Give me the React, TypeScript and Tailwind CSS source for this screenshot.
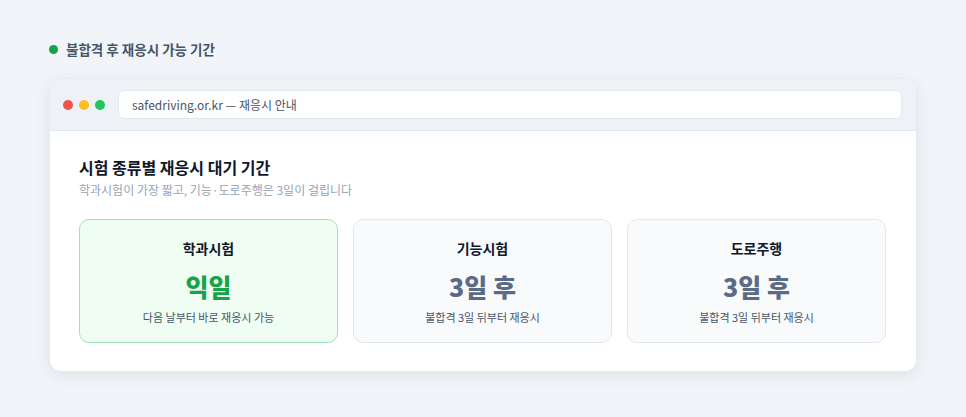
import React from "react";

const font = { fontFamily: '"Noto Sans CJK KR", "Noto Sans", sans-serif' };

type Item = { title: string; value: string; desc: string; pass?: boolean };

const items: Item[] = [
  { title: "학과시험", value: "익일", desc: "다음 날부터 바로 재응시 가능", pass: true },
  { title: "기능시험", value: "3일 후", desc: "불합격 3일 뒤부터 재응시" },
  { title: "도로주행", value: "3일 후", desc: "불합격 3일 뒤부터 재응시" },
];

export default function App() {
  return (
    <div className="w-[966px] h-[417px] bg-[#f1f4f8] px-[49px] pt-[40px]" style={font}>
      {/* section label */}
      <div className="flex items-center gap-[8px] h-[18px]">
        <span className="w-[9px] h-[9px] rounded-full bg-[#16a34a]" />
        <span className="text-[13.5px] font-bold text-[#475569] leading-[18px]">불합격 후 재응시 가능 기간</span>
      </div>

      {/* browser frame */}
      <div className="mt-[20px] w-[868px] bg-white rounded-[12px] overflow-hidden shadow-[0_4px_16px_rgba(15,23,42,0.08)] border border-[#e6ebf1]">
        <div className="flex items-center gap-[13px] bg-[#eef2f6] border-b border-[#e2e8f0] h-[52px] pl-[13px] pr-[14px]">
          <div className="flex items-center gap-[6px]">
            <span className="w-[10px] h-[10px] rounded-full bg-[#ef5350]" />
            <span className="w-[10px] h-[10px] rounded-full bg-[#fbbf24]" />
            <span className="w-[10px] h-[10px] rounded-full bg-[#22c55e]" />
          </div>
          <div className="flex-1 h-[29px] bg-white rounded-[6px] border border-[#e5e9ef] flex items-center px-[13px] text-[12px] text-[#475569]">
            safedriving.or.kr — 재응시 안내
          </div>
        </div>

        <div className="pl-[29px] pr-[30px] pt-[24px] pb-[28px]">
          <h2 className="text-[16px] font-bold text-[#0f172a] leading-[24px]">시험 종류별 재응시 대기 기간</h2>
          <p className="mt-[2px] text-[12px] text-[#94a3b8] leading-[18px]">
            학과시험이 가장 짧고, 기능·도로주행은 3일이 걸립니다
          </p>

          <div className="mt-[20px] grid grid-cols-3 gap-[15px]">
            {items.map((it) => (
              <div
                key={it.title}
                className={
                  it.pass
                    ? "h-[124px] rounded-[10px] border border-[#9fe3b6] bg-[#effdf3] flex flex-col items-center pt-[18px]"
                    : "h-[124px] rounded-[10px] border border-[#e2e8f0] bg-[#f8fafc] flex flex-col items-center pt-[18px]"
                }
              >
                <div className="text-[14px] font-bold text-[#0f172a] leading-[20px]">{it.title}</div>
                <div
                  className={
                    it.pass
                      ? "mt-[11px] text-[25px] font-extrabold leading-[34px] text-[#16a34a]"
                      : "mt-[11px] text-[25px] font-extrabold leading-[34px] text-[#5b6b85]"
                  }
                >
                  {it.value}
                </div>
                <div className="mt-[6px] text-[11px] text-[#475569] leading-[16px]">{it.desc}</div>
              </div>
            ))}
          </div>
        </div>
      </div>
    </div>
  );
}
